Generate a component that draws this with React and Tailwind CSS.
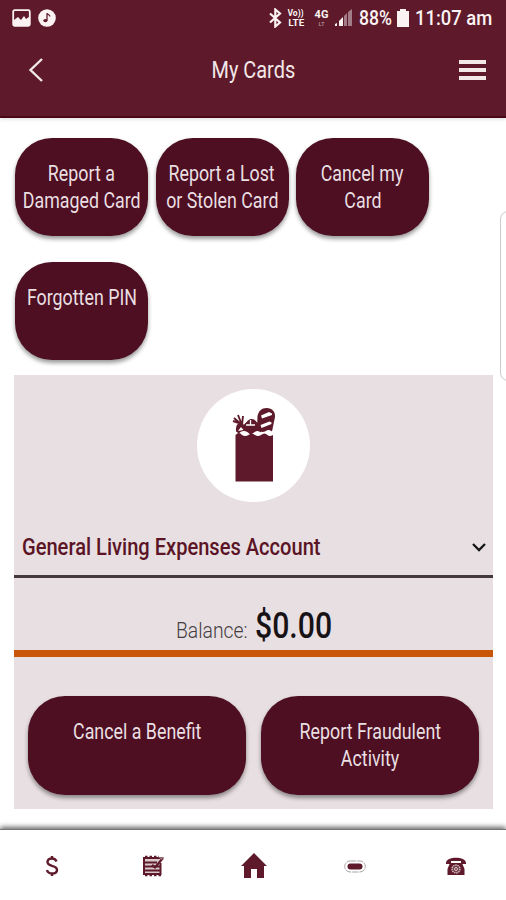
import React from "react";

const cardActions = [
  ["Report a", "Damaged Card"],
  ["Report a Lost", "or Stolen Card"],
  ["Cancel my", "Card"],
  ["Forgotten PIN"],
];

const benefitActions = [["Cancel a Benefit"], ["Report Fraudulent", "Activity"]];

function ActionButton({ lines, className }) {
  return (
    <button
      className={`flex flex-col items-center rounded-[37px] bg-[#4d0f21] pt-[22px] text-[22px] leading-[27px] text-[#eadfe2] shadow-[0_3px_4px_rgba(0,0,0,0.4)] ${className}`}
    >
      {lines.map((line) => (
        <span key={line} className="scale-x-[0.81] whitespace-nowrap">
          {line}
        </span>
      ))}
    </button>
  );
}

function StatusBar() {
  return (
    <div className="flex h-9 items-center justify-between pl-3 pr-[13px] text-[#fbf3f3]">
      <div className="flex items-center gap-[7px]">
        <svg width="19" height="18" viewBox="0 0 19 18">
          <rect x="1.2" y="1.2" width="16.6" height="15.6" rx="1.5" fill="none" stroke="currentColor" strokeWidth="1.8" />
          <path d="M2 11l4-3 3 3 3-4 2 3 3-2v9H2z" fill="currentColor" />
        </svg>
        <svg width="18" height="18" viewBox="0 0 18 18">
          <circle cx="9" cy="9" r="8.8" fill="currentColor" />
          <ellipse cx="7.4" cy="11.6" rx="2.1" ry="1.7" fill="#5e1a2b" />
          <path d="M9 11.5V4.2c.6 1.6 2.9 1.2 2.9 3.4" fill="none" stroke="#5e1a2b" strokeWidth="1.3" />
        </svg>
      </div>
      <div className="flex items-center">
        <svg width="13" height="20" viewBox="0 0 13 20" className="mr-[5px]">
          <path d="M1 5.5l10 9-4.700 4V1.500l4.700 4-10 9" fill="none" stroke="currentColor" strokeWidth="2.2" />
        </svg>
        <div className="mr-2 flex w-[18px] flex-col items-center gap-px text-[9px] leading-[9px] font-bold">
          <span className="h-[9px] scale-x-[0.95] overflow-hidden whitespace-nowrap">Vo))</span>
          <span className="h-[9px] scale-x-[1.1] overflow-hidden">LTE</span>
        </div>
        <div className="mr-[4px] flex w-[17px] flex-col items-center text-[11px] leading-[10px] font-bold">
          <span>4G</span>
          <span className="text-[6px] leading-[7px] font-normal opacity-60">LT</span>
        </div>
        <svg width="19" height="18" viewBox="0 0 19 18" className="mr-[6px]">
          <path d="M1 17v-2l2-1v3zM5 17v-5l4-4v9z" fill="currentColor" />
          <path d="M10 17V7l3-3v13zM14 17V3l4-3v17z" fill="#a27d87" />
        </svg>
        <span className="w-[33px] origin-left scale-x-[0.88] text-[20px] leading-5 font-medium">88%</span>
        <svg width="12" height="18" viewBox="0 0 12 18" className="mr-[6px] ml-[5px]">
          <path d="M3 0h6v2h3v16H0V2h3z" fill="currentColor" />
        </svg>
        <span className="w-[78px] origin-left scale-x-[0.92] text-[20px] leading-5 font-medium whitespace-nowrap">
          11:07 am
        </span>
      </div>
    </div>
  );
}

function Header() {
  return (
    <header className="h-[118px] border-b-2 border-[#4b0712] bg-[#5e1a2b] shadow-[0_1px_4px_rgba(0,0,0,0.15)]">
      <StatusBar />
      <div className="flex h-[68px] items-center justify-between pr-5 pl-7 text-[#f3e8e8]">
        <svg width="16" height="26" viewBox="0 0 16 26">
          <path d="M14 2L2.500 13 14 24" fill="none" stroke="currentColor" strokeWidth="2.400" />
        </svg>
        <h1 className="ml-[3px] scale-x-[0.83] text-[24px] leading-8">My Cards</h1>
        <div className="flex flex-col gap-1">
          <span className="h-1 w-[27px] bg-current" />
          <span className="h-1 w-[27px] bg-current" />
          <span className="h-1 w-[27px] bg-current" />
        </div>
      </div>
    </header>
  );
}

function GroceryBag() {
  return (
    <svg width="44" height="76" viewBox="0 0 44 76" className="-mt-0.5">
      <path d="M3.500 28q3.500-4 6.500 0 3 2 6.500 0 3-3 6.500 0 3 2 6 0 3.500-3 6.500 0 2 2 5.500 0v46.500h-37.500z" fill="#5e1a2b" />
      {/* vegetables */}
      <path
        d="M4 24.500c0-4 0-7 3-8l5 1 4-4c4-3 7-1 9 2l4 2v8c-3-2-5-2-7 0-3 2-4 2-6 0-4-2-6-2-9 1z"
        fill="#5e1a2b"
      />
      {/* bread */}
      <path d="M25.500 9c1-5 4-8 9-8 6 0 9 4 8.500 9L40 24.500c-3-2-4-2-7 0-3 1-5 0-8-2z" fill="#5e1a2b" />
      <path d="M2 11l8 7M6 8l4 10M11 9l-1 9M1 14l6 2" stroke="#5e1a2b" strokeWidth="1.900" />
      <path d="M29 8.500l8-3.500 3 1.500v1.500l-10 3.500zM28.500 18l9-3.500 2 1v1.500l-10 4zM6 24l3-4 2.500 3z" fill="#fff" />
      <path d="M14 18h9M18.500 13v5" stroke="#fff" strokeWidth="1.300" />
    </svg>
  );
}

function AccountPanel() {
  return (
    <section className="mr-[13px] ml-[14px] mt-[15px] flex h-[434px] flex-col bg-[#e8dfe2]">
      <div className="mt-[14px] flex size-[113px] items-center justify-center self-center rounded-full bg-white">
        <GroceryBag />
      </div>
      <div className="mt-[17px] flex h-[59px] items-center justify-between border-b-[3px] border-[#46393e] pr-[6px] pl-2 text-[#5a1425]">
        <span className="origin-left scale-x-[0.837] text-[24px] font-medium whitespace-nowrap">
          General Living Expenses Account
        </span>
        <svg width="16" height="10" viewBox="0 0 16 10">
          <path d="M2 2l6 6 6-6" fill="none" stroke="#151515" strokeWidth="2.300" />
        </svg>
      </div>
      <div className="flex h-[79px] items-baseline justify-center border-b-[7px] border-[#c85508] pt-[21px] text-[#171216]">
        <span className="w-[79px] origin-left scale-x-[0.88] text-[22px] font-light text-[#443e42]">Balance:</span>
        <span className="w-[77px] origin-left scale-x-[0.84] text-[36px] leading-[54px] font-medium">$0.00</span>
      </div>
      <div className="mt-[39px] flex justify-center gap-[15px]">
        {benefitActions.map((lines) => (
          <ActionButton key={lines[0]} lines={lines} className="h-[99px] w-[218px]" />
        ))}
      </div>
    </section>
  );
}

function BottomNav() {
  return (
    <nav className="mt-auto grid h-[71px] grid-cols-5 items-start justify-items-center border-t border-[#777] pt-[21px] pl-[2px] text-[#5e1a2b] shadow-[0_-2px_5px_rgba(0,0,0,0.6)]">
      <svg width="18" height="30" viewBox="0 0 18 30">
        <path
          d="M13.500 10.500Q12.500 7.500 9 7.500q-4.500 0-4.500 3.500 0 2.500 4.500 3.800 5 1.300 5 4.200 0 3.500-5 3.500-4 0-5-3.500M9 5v3M9 22v3"
          fill="none"
          stroke="currentColor"
          strokeWidth="2.400"
        />
      </svg>
      <svg width="22" height="30" viewBox="0 0 22 30">
        <path d="M2 6h17v18H2z" fill="#d9c9cd" />
        <path d="M2 6v18M18.500 12v12M2 7h16M2 11.500h13M2 15.500h16M2 19.500h16M2 23h17" fill="none" stroke="currentColor" strokeWidth="2" />
        <path d="M3 5.500h14M3 24.500h16" stroke="currentColor" strokeWidth="1.500" strokeDasharray="2.500 2" />
        <path d="M10 14l3 2.500 8-9.500" fill="none" stroke="currentColor" strokeWidth="2.300" />
        <path d="M16 6h6l-2 3z" fill="#8f6874" />
      </svg>
      <svg width="28" height="30" viewBox="0 0 28 30">
        <path d="M14 2L1 15h3v12h7v-9h6v9h7V15h3z" fill="currentColor" />
      </svg>
      <svg width="22" height="30" viewBox="0 0 22 30">
        <rect x=".7" y="10" width="20.600" height="11" rx="5.500" fill="none" stroke="#aaa0a3" strokeWidth="1" strokeDasharray="6 1" />
        <rect x="3.500" y="12.500" width="15" height="6" rx="3" fill="currentColor" />
      </svg>
      <svg width="22" height="30" viewBox="0 0 22 30">
        <path d="M1 12c0-7 20-7 20 0v1h-5v-3H6v3H1z" fill="currentColor" />
        <path d="M5 12h12l2.500 6v6h-17v-6z" fill="currentColor" />
        <circle cx="11" cy="18" r="4" fill="#76404e" stroke="#d8c3c9" strokeWidth="1.300" strokeDasharray="1.500 .7" />
        <circle cx="11" cy="18" r="1.500" fill="none" stroke="#d8c3c9" />
      </svg>
    </nav>
  );
}

function App() {
  return (
    <div className="relative flex h-[900px] w-[506px] flex-col overflow-hidden bg-white font-[Roboto,sans-serif]">
      <Header />
      <div className="flex flex-wrap gap-x-[7.5px] gap-y-[26px] pt-5 pl-[15px]">
        {cardActions.map((lines) => (
          <ActionButton key={lines[0]} lines={lines} className="h-[98px] w-[133px]" />
        ))}
      </div>
      <AccountPanel />
      <BottomNav />
      {/* edge panel handle */}
      <div className="absolute top-[211px] -right-3 h-[170px] w-[18px] rounded-lg border border-[#ccc] bg-white" />
    </div>
  );
}

export default App;
